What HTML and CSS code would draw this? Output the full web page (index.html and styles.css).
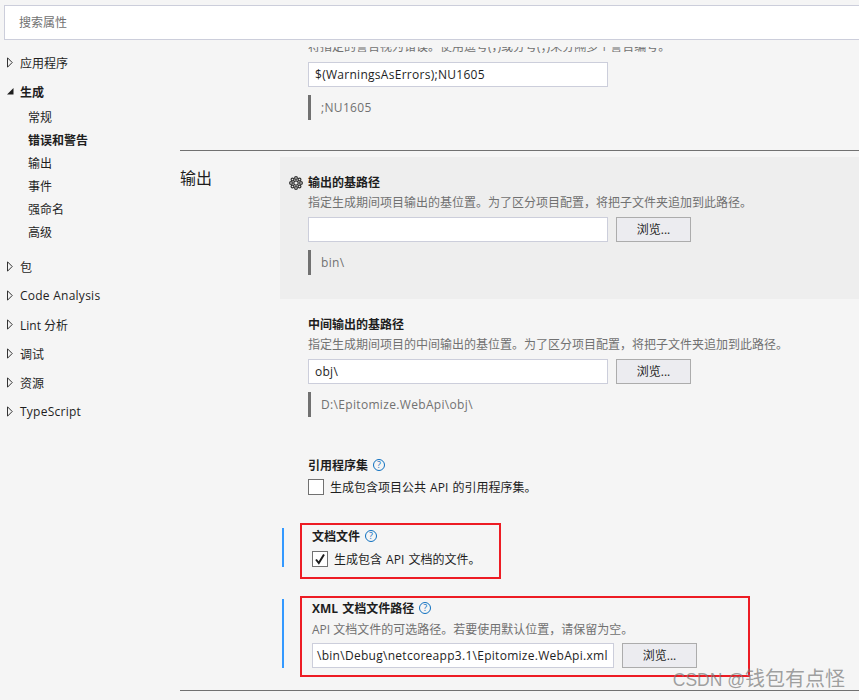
FILE: index.html
```html
<!DOCTYPE html>
<html lang="zh-CN">
<head>
    <meta charset="UTF-8">
    <meta name="viewport" content="width=device-width, initial-scale=1.0">
    <title>项目属性</title>
    <link rel="stylesheet" href="styles.css">
</head>
<body>
    <div class="page">
        <div class="search">搜索属性</div>
        <div class="layout">
            <nav class="sidebar">
                <div class="nav-item"><svg class="arrow" viewBox="0 0 6 11"><path d="M0.5 0.8 L5.2 5.5 L0.5 10.2 Z"/></svg>应用程序</div>
                <div class="nav-item nav-open"><svg class="arrow-open" viewBox="0 0 7 7"><path d="M6.5 0 V6.5 H0 Z"/></svg>生成</div>
                <div class="sub-list">
                    <div class="sub-item">常规</div>
                    <div class="sub-item sub-active">错误和警告</div>
                    <div class="sub-item">输出</div>
                    <div class="sub-item">事件</div>
                    <div class="sub-item">强命名</div>
                    <div class="sub-item">高级</div>
                </div>
                <div class="nav-item"><svg class="arrow" viewBox="0 0 6 11"><path d="M0.5 0.8 L5.2 5.5 L0.5 10.2 Z"/></svg>包</div>
                <div class="nav-item latin"><svg class="arrow" viewBox="0 0 6 11"><path d="M0.5 0.8 L5.2 5.5 L0.5 10.2 Z"/></svg>Code Analysis</div>
                <div class="nav-item"><svg class="arrow" viewBox="0 0 6 11"><path d="M0.5 0.8 L5.2 5.5 L0.5 10.2 Z"/></svg>Lint 分析</div>
                <div class="nav-item"><svg class="arrow" viewBox="0 0 6 11"><path d="M0.5 0.8 L5.2 5.5 L0.5 10.2 Z"/></svg>调试</div>
                <div class="nav-item"><svg class="arrow" viewBox="0 0 6 11"><path d="M0.5 0.8 L5.2 5.5 L0.5 10.2 Z"/></svg>资源</div>
                <div class="nav-item latin"><svg class="arrow" viewBox="0 0 6 11"><path d="M0.5 0.8 L5.2 5.5 L0.5 10.2 Z"/></svg>TypeScript</div>
            </nav>
            <main class="content">
                <div class="section top-section">
                    <div></div>
                    <div class="setting">
                        <div class="clipped"><span>将指定的警告视为错误。使用逗号(，)或分号(；)来分隔多个警告编号。</span></div>
                        <div class="field first-field">$(WarningsAsErrors);NU1605</div>
                        <div class="value">;NU1605</div>
                    </div>
                </div>
                <hr class="divider">
                <div class="section">
                    <h2 class="section-title">输出</h2>
                    <div>
                        <div class="panel">
                            <svg class="gear" viewBox="0 0 14 14">
                                <g fill="none" stroke="#333" stroke-width="1.2">
                                    <circle cx="7" cy="7" r="2.2"/>
                                    <circle cx="7" cy="2" r="1.4"/>
                                    <circle cx="7" cy="12" r="1.4"/>
                                    <circle cx="2" cy="7" r="1.4"/>
                                    <circle cx="12" cy="7" r="1.4"/>
                                    <circle cx="3.5" cy="3.5" r="1.4"/>
                                    <circle cx="10.5" cy="3.5" r="1.4"/>
                                    <circle cx="3.5" cy="10.5" r="1.4"/>
                                    <circle cx="10.5" cy="10.5" r="1.4"/>
                                </g>
                            </svg>
                            <div class="title">输出的基路径</div>
                            <div class="desc">指定生成期间项目输出的基位置。为了区分项目配置，将把子文件夹追加到此路径。</div>
                            <div class="field-row">
                                <div class="field"></div>
                                <div class="button">浏览...</div>
                            </div>
                            <div class="value">bin\</div>
                        </div>
                        <div class="setting obj-setting">
                            <div class="title">中间输出的基路径</div>
                            <div class="desc">指定生成期间项目的中间输出的基位置。为了区分项目配置，将把子文件夹追加到此路径。</div>
                            <div class="field-row">
                                <div class="field">obj\</div>
                                <div class="button">浏览...</div>
                            </div>
                            <div class="value">D:\Epitomize.WebApi\obj\</div>
                        </div>
                        <div class="setting ref-setting">
                            <div class="title">引用程序集<span class="help">?</span></div>
                            <div class="check-row">
                                <span class="checkbox"></span>
                                <span>生成包含项目公共 API 的引用程序集。</span>
                            </div>
                        </div>
                        <div class="changed doc-row">
                            <div class="changed-bar doc-bar"></div>
                            <div class="marked doc-box">
                                <div class="title">文档文件<span class="help">?</span></div>
                                <div class="check-row doc-check">
                                    <span class="checkbox">
                                        <svg viewBox="0 0 14 14"><path d="M3 7.5 L5.8 11 L11 2.5" fill="none" stroke="#1e1e1e" stroke-width="2"/></svg>
                                    </span>
                                    <span>生成包含 API 文档的文件。</span>
                                </div>
                            </div>
                        </div>
                        <div class="changed xml-row">
                            <div class="changed-bar xml-bar"></div>
                            <div class="marked xml-box">
                                <div class="title">XML 文档文件路径<span class="help">?</span></div>
                                <div class="desc xml-desc">API 文档文件的可选路径。若要使用默认位置，请保留为空。</div>
                                <div class="field-row xml-field">
                                    <div class="field">\bin\Debug\netcoreapp3.1\Epitomize.WebApi.xml</div>
                                    <div class="button">浏览...</div>
                                </div>
                            </div>
                        </div>
                    </div>
                </div>
                <hr class="divider bottom-divider">
            </main>
        </div>
        <div class="watermark"><span class="watermark-latin">CSDN @</span>钱包有点怪</div>
    </div>
</body>
</html>
```

FILE: styles.css
```css
* {
    box-sizing: border-box;
}
body {
    margin: 0;
    font-family: 'Open Sans', 'Noto Sans CJK SC', sans-serif;
    font-size: 12px;
    color: #1e1e1e;
    background-color: #f5f5f5;
}
.page {
    position: relative;
    height: 700px;
    overflow: hidden;
}
.search {
    height: 35px;
    margin: 5px 0 0 4px;
    padding-left: 14px;
    line-height: 33px;
    color: #717171;
    background-color: #fff;
    border: 1px solid #cccedb;
    border-right: none;
}
.layout {
    display: grid;
    grid-template-columns: 180px 1fr;
}
.sidebar {
    padding-top: 8px;
}
.nav-item {
    display: flex;
    align-items: center;
    height: 29px;
    padding-left: 7px;
}
.latin {
    letter-spacing: 0.25px;
}
.arrow {
    width: 6px;
    height: 11px;
    margin-right: 7px;
    fill: #f5f5f5;
    stroke: #333;
    stroke-width: 1;
}
.arrow-open {
    width: 7px;
    height: 7px;
    margin-right: 6px;
    fill: #1e1e1e;
}
.nav-open {
    font-weight: bold;
}
.sub-list {
    margin-bottom: 8px;
    padding-left: 28px;
}
.sub-item {
    height: 23px;
    line-height: 23px;
}
.sub-active {
    font-weight: bold;
}
.content {
    min-width: 0;
    overflow: hidden;
}
.section {
    display: grid;
    grid-template-columns: 100px 1fr;
}
.section-title {
    margin: 16px 0 0;
    font-size: 16px;
    font-weight: normal;
    line-height: 22px;
}
.top-section {
    height: 110px;
}
.setting {
    padding-left: 28px;
}
.clipped {
    display: flex;
    align-items: flex-end;
    height: 8px;
    margin-top: 7px;
    overflow: hidden;
    color: #717171;
    line-height: 16px;
}
.clipped span {
    white-space: nowrap;
}
.first-field {
    margin-top: 7px;
}
.divider {
    height: 1px;
    margin: 0;
    background-color: #717171;
    border: none;
}
.bottom-divider {
    margin-top: 13px;
}
.panel {
    position: relative;
    margin-top: 6px;
    padding: 15px 0 24px 28px;
    background-color: #eeeeee;
}
.gear {
    position: absolute;
    left: 9px;
    top: 19px;
    width: 14px;
    height: 14px;
}
.title {
    display: flex;
    align-items: center;
    height: 20px;
    font-weight: bold;
    word-spacing: 1px;
}
.desc {
    height: 20px;
    line-height: 22px;
    color: #717171;
    white-space: nowrap;
}
.field-row {
    display: flex;
    gap: 8px;
    margin-top: 5px;
}
.field {
    width: 300px;
    height: 25px;
    padding-left: 6px;
    line-height: 23px;
    letter-spacing: 0.28px;
    white-space: nowrap;
    overflow: hidden;
    background-color: #fff;
    border: 1px solid #cccedb;
}
.button {
    width: 75px;
    height: 25px;
    line-height: 23px;
    text-align: center;
    background-color: #ececf0;
    border: 1px solid #acacac;
}
.value {
    height: 25px;
    margin-top: 8px;
    padding-left: 10px;
    line-height: 25px;
    letter-spacing: 0.33px;
    color: #717171;
    border-left: 3px solid #717171;
}
.obj-setting {
    margin-top: 15px;
}
.ref-setting {
    margin-top: 38px;
}
.help {
    width: 12px;
    height: 12px;
    margin-left: 5px;
    font-size: 9px;
    font-weight: normal;
    line-height: 10px;
    text-align: center;
    color: #0e70c0;
    border: 1px solid #0e70c0;
    border-radius: 50%;
}
.check-row {
    display: flex;
    align-items: center;
    gap: 6px;
    height: 16px;
    margin-top: 4px;
    word-spacing: 1px;
}
.checkbox {
    display: block;
    width: 16px;
    height: 16px;
    background-color: #fff;
    border: 1px solid #717171;
}
.checkbox svg {
    display: block;
    width: 14px;
    height: 14px;
}
.changed {
    display: flex;
    padding-left: 2px;
}
.changed-bar {
    width: 2px;
    margin-right: 16px;
    background-color: #3399ff;
}
.doc-row {
    margin-top: 28px;
}
.doc-bar {
    height: 39px;
    margin-top: 5px;
}
.xml-row {
    margin-top: 17px;
}
.xml-bar {
    height: 69px;
    margin-top: 3px;
}
.marked {
    border: 2px solid #ed1c24;
    padding: 0 10px;
}
.doc-box {
    width: 201px;
    height: 56px;
    padding-top: 1px;
}
.doc-check {
    margin-top: 5px;
}
.xml-box {
    width: 450px;
    height: 81px;
}
.xml-desc {
    margin-top: 1px;
}
.xml-field {
    margin-top: 4px;
}
.xml-field .field {
    width: 302px;
    padding-left: 4px;
}
.watermark {
    position: absolute;
    right: 14px;
    bottom: 8px;
    font-family: 'Liberation Sans', 'Noto Sans CJK SC', sans-serif;
    font-size: 20px;
    line-height: 24px;
    color: rgba(120, 120, 120, 0.7);
}
.watermark-latin {
    font-size: 17.5px;
}
```
